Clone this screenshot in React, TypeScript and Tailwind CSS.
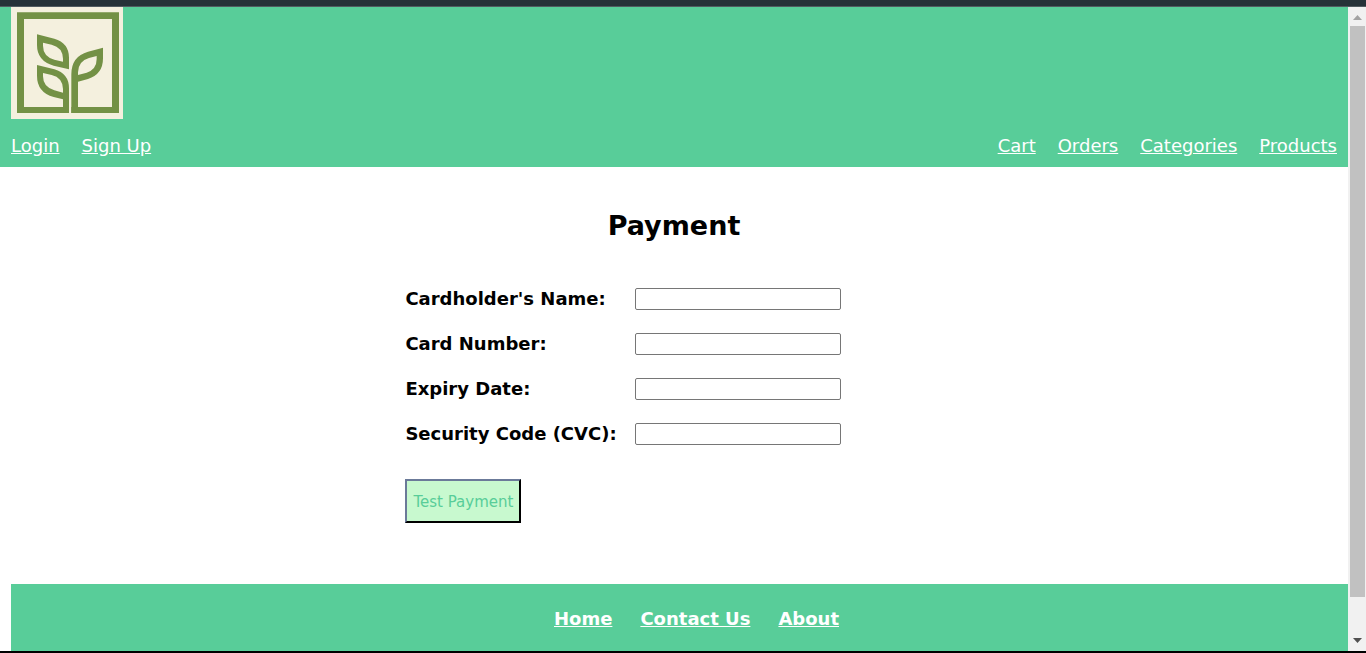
import React from "react";

const accountLinks = ["Login", "Sign Up"];
const shopLinks = ["Cart", "Orders", "Categories", "Products"];
const footerLinks = ["Home", "Contact Us", "About"];

const fields = [
  { id: "cardholder", label: "Cardholder's Name:" },
  { id: "card-number", label: "Card Number:" },
  { id: "expiry", label: "Expiry Date:" },
  { id: "cvc", label: "Security Code (CVC):" },
];

function Logo() {
  return (
    <svg viewBox="0 0 336 336" className="block size-28" role="img" aria-label="Plant logo">
      <rect width="336" height="336" fill="#f4f0de" />
      <g fill="#739145" fillRule="evenodd">
        <path d="M18 16H324V318H181V300H303V36H39V300H174V318H18Z" />
        <path d="M78 82L130 95Q174 108 174 152V187L128 176Q78 162 78 114ZM96 107V116Q96 148 130 158L156 164V155Q155 121 122 113Z" />
        <path d="M78 174L130 187Q174 200 174 244V318H156V277L128 270Q78 256 78 206ZM96 198V208Q96 240 130 250L156 257V246Q155 212 122 204Z" />
        <path d="M276 122L231 134Q181 148 181 202V318H201V224L231 216Q276 202 276 154ZM257 147V156Q257 187 227 197L201 204V196Q202 162 234 153Z" />
      </g>
    </svg>
  );
}

function NavLinks({ items }: { items: string[] }) {
  return (
    <ul className="flex gap-[22px]">
      {items.map((item) => (
        <li key={item}>
          <a href="#" className="underline">{item}</a>
        </li>
      ))}
    </ul>
  );
}

function ScrollRail() {
  return (
    <div aria-hidden="true" className="flex w-[18px] shrink-0 flex-col items-center bg-[#f1f1f1] pl-px">
      <svg viewBox="0 0 17 19" className="h-[19px] w-[17px] shrink-0">
        <path d="M8.500 8L13 13H4Z" fill="#a3a3a3" />
      </svg>
      <div className="flex w-full grow flex-col pr-px pl-px">
        <div className="grow-[571] bg-[#c1c1c1]" />
        <div className="grow-[36]" />
      </div>
      <svg viewBox="0 0 17 18" className="h-[18px] w-[17px] shrink-0">
        <path d="M4 5H13L8.500 10Z" fill="#505050" />
      </svg>
    </div>
  );
}

export default function App() {
  return (
    <div className="flex min-h-screen flex-col bg-white font-['DejaVu_Sans',sans-serif] text-lg leading-6 text-black">
      <div className="h-[7px] shrink-0 border-b border-[#515b60] bg-[#263238]" />
      <div className="flex grow">
        <div className="flex min-w-0 grow flex-col">
          <header className="bg-[#58cd99] px-[11px] text-white">
            <Logo />
            <nav className="flex justify-between pt-[15px] pb-[9px]">
              <NavLinks items={accountLinks} />
              <NavLinks items={shopLinks} />
            </nav>
          </header>

          <main className="grow pt-[41px] pb-[61px]">
            <h1 className="text-center text-[27px] leading-9 font-bold">Payment</h1>
            <form className="ml-[30%] pt-[43px] pl-px" onSubmit={(e) => e.preventDefault()}>
              <div className="grid grid-cols-[210px_206px] items-center gap-x-5 gap-y-[21px]">
                {fields.map((field) => (
                  <React.Fragment key={field.id}>
                    <label htmlFor={field.id} className="font-bold whitespace-nowrap">
                      {field.label}
                    </label>
                    <input
                      id={field.id}
                      type="text"
                      className="h-[22px] rounded-[2px] border border-[#767676] bg-white px-1 text-sm"
                    />
                  </React.Fragment>
                ))}
              </div>
              <button
                type="submit"
                className="mt-[33px] h-11 border-2 border-t-[#6b7a99] border-r-black border-b-black border-l-[#6b7a99] bg-[#c8f9cf] px-1.5 pt-px text-[15px] text-[#58cd99]"
              >
                Test Payment
              </button>
            </form>
          </main>

          <footer className="ml-[11px] bg-[#58cd99] pt-[23px] pb-5 font-bold text-white">
            <ul className="flex justify-center gap-7 pl-[34px]">
              {footerLinks.map((item) => (
                <li key={item}>
                  <a href="#" className="underline">{item}</a>
                </li>
              ))}
            </ul>
          </footer>
        </div>
        <ScrollRail />
      </div>
      <div className="h-0.5 shrink-0 bg-black" />
    </div>
  );
}
